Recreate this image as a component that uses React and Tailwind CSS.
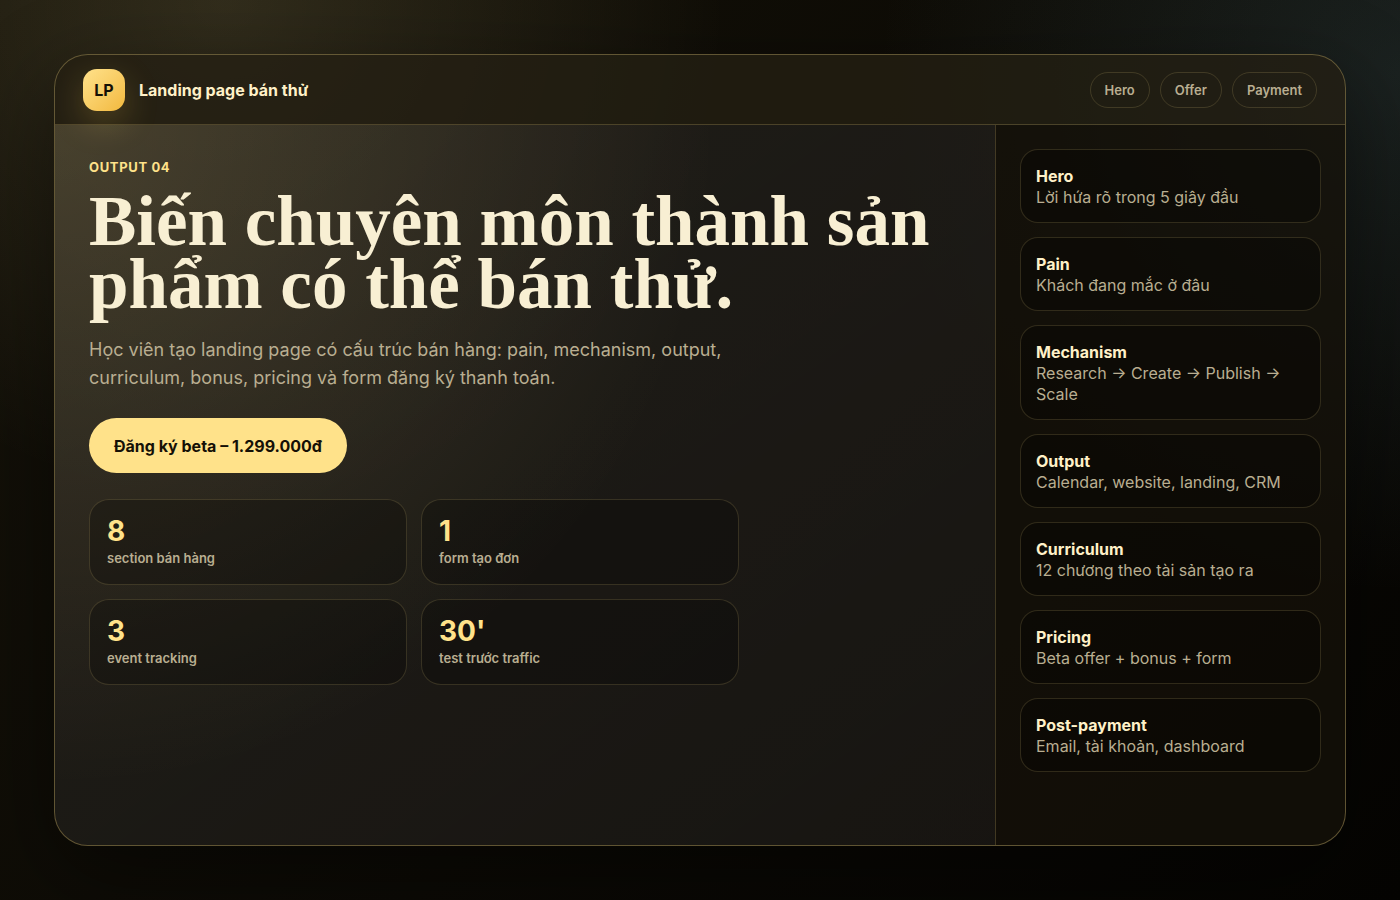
import React from 'react'

const navLinks = [
  { label: 'Hero', href: '#hero' },
  { label: 'Offer', href: '#offer' },
  { label: 'Payment', href: '#payment' },
]

const stats = [
  { value: '8', label: 'section bán hàng' },
  { value: '1', label: 'form tạo đơn' },
  { value: '3', label: 'event tracking' },
  { value: "30'", label: 'test trước traffic' },
]

const sections = [
  { title: 'Hero', text: 'Lời hứa rõ trong 5 giây đầu' },
  { title: 'Pain', text: 'Khách đang mắc ở đâu' },
  { title: 'Mechanism', text: 'Research → Create → Publish → Scale' },
  { title: 'Output', text: 'Calendar, website, landing, CRM' },
  { title: 'Curriculum', text: '12 chương theo tài sản tạo ra' },
  { title: 'Pricing', text: 'Beta offer + bonus + form' },
  { title: 'Post-payment', text: 'Email, tài khoản, dashboard' },
]

function Header() {
  return (
    <header className="flex h-[70px] items-center justify-between border-b border-[#ffe28a]/20 bg-[#ffe28a]/8 px-7">
      <div className="flex items-center gap-[14px]">
        <div className="flex h-[42px] w-[42px] items-center justify-center rounded-[14px] bg-linear-135 from-[#ffe28a] to-[#f2b93b] font-bold text-[#151006] shadow-[0_12px_34px_rgba(255,210,80,0.22)]">
          LP
        </div>
        <span className="font-bold">Landing page bán thử</span>
      </div>
      <nav className="flex gap-[10px]">
        {navLinks.map((link) => (
          <a
            key={link.href}
            href={link.href}
            className="rounded-full border border-[#ffe28a]/15 px-[14px] py-2 text-[13px] leading-[18px] font-semibold text-[#b9ae91]"
          >
            {link.label}
          </a>
        ))}
      </nav>
    </header>
  )
}

function Hero() {
  return (
    <section
      id="hero"
      className="bg-[radial-gradient(circle_at_0%_0%,rgba(255,226,138,0.16),transparent_56%),linear-gradient(145deg,rgba(255,255,255,0.08),rgba(255,255,255,0.05))] p-[34px]"
    >
      <p className="mb-[14px] text-[13px] leading-[17px] font-bold tracking-wider text-[#ffe28a]">OUTPUT 04</p>
      <h1 className="mb-5 font-['Liberation_Serif',serif] text-[71px] leading-[63px] font-bold text-[#f8efd3]">
        Biến chuyên môn thành sản phẩm có thể bán thử.
      </h1>
      <p className="max-w-[680px] text-[18px] leading-[28px] text-[#b9ae91]">
        Học viên tạo landing page có cấu trúc bán hàng: pain, mechanism, output, curriculum, bonus, pricing và form
        đăng ký thanh toán.
      </p>
      <button
        type="button"
        className="my-[26px] block h-[55px] rounded-full bg-[#ffe28a] px-[25px] font-bold text-[#151006]"
      >
        Đăng ký beta – 1.299.000đ
      </button>
      <div id="offer" className="grid max-w-[650px] grid-cols-2 gap-[14px]">
        {stats.map((stat) => (
          <div
            key={stat.label}
            className="flex flex-col gap-[5px] rounded-[20px] border border-[#ffe28a]/15 bg-black/25 p-[17px]"
          >
            <strong className="text-[28px] leading-[28px] font-bold text-[#ffe28a]">{stat.value}</strong>
            <span className="text-[13px] leading-[17px] font-semibold text-[#b9ae91]">{stat.label}</span>
          </div>
        ))}
      </div>
    </section>
  )
}

function Outline() {
  return (
    <aside
      id="payment"
      className="flex flex-col gap-[14px] border-l border-[#ffe28a]/20 bg-[#ffe28a]/3 p-6 leading-[21px]"
    >
      {sections.map((section) => (
        <div
          key={section.title}
          className="rounded-[18px] border border-[#ffe28a]/15 bg-black/30 px-[15px] pt-4 pb-[14px]"
        >
          <h2 className="font-bold text-[#fff1c8]">{section.title}</h2>
          <p className="text-[#b9ae91]">{section.text}</p>
        </div>
      ))}
    </aside>
  )
}

export default function App() {
  return (
    <div className="flex min-h-screen bg-[radial-gradient(circle_at_16%_0%,rgba(255,235,160,0.13),transparent_34%),radial-gradient(circle_at_100%_8%,rgba(90,130,140,0.2),transparent_32%),linear-gradient(135deg,#151209,#050402)] p-[54px] font-[Inter,sans-serif] text-base text-[#fff1c8]">
      <main className="flex flex-1 flex-col overflow-hidden rounded-[34px] border border-[#ffe28a]/35 bg-[#0c0a06]/75 shadow-[0_30px_90px_rgba(0,0,0,0.45)]">
        <Header />
        <div className="grid flex-1 grid-cols-[minmax(0,1fr)_350px]">
          <Hero />
          <Outline />
        </div>
      </main>
    </div>
  )
}
